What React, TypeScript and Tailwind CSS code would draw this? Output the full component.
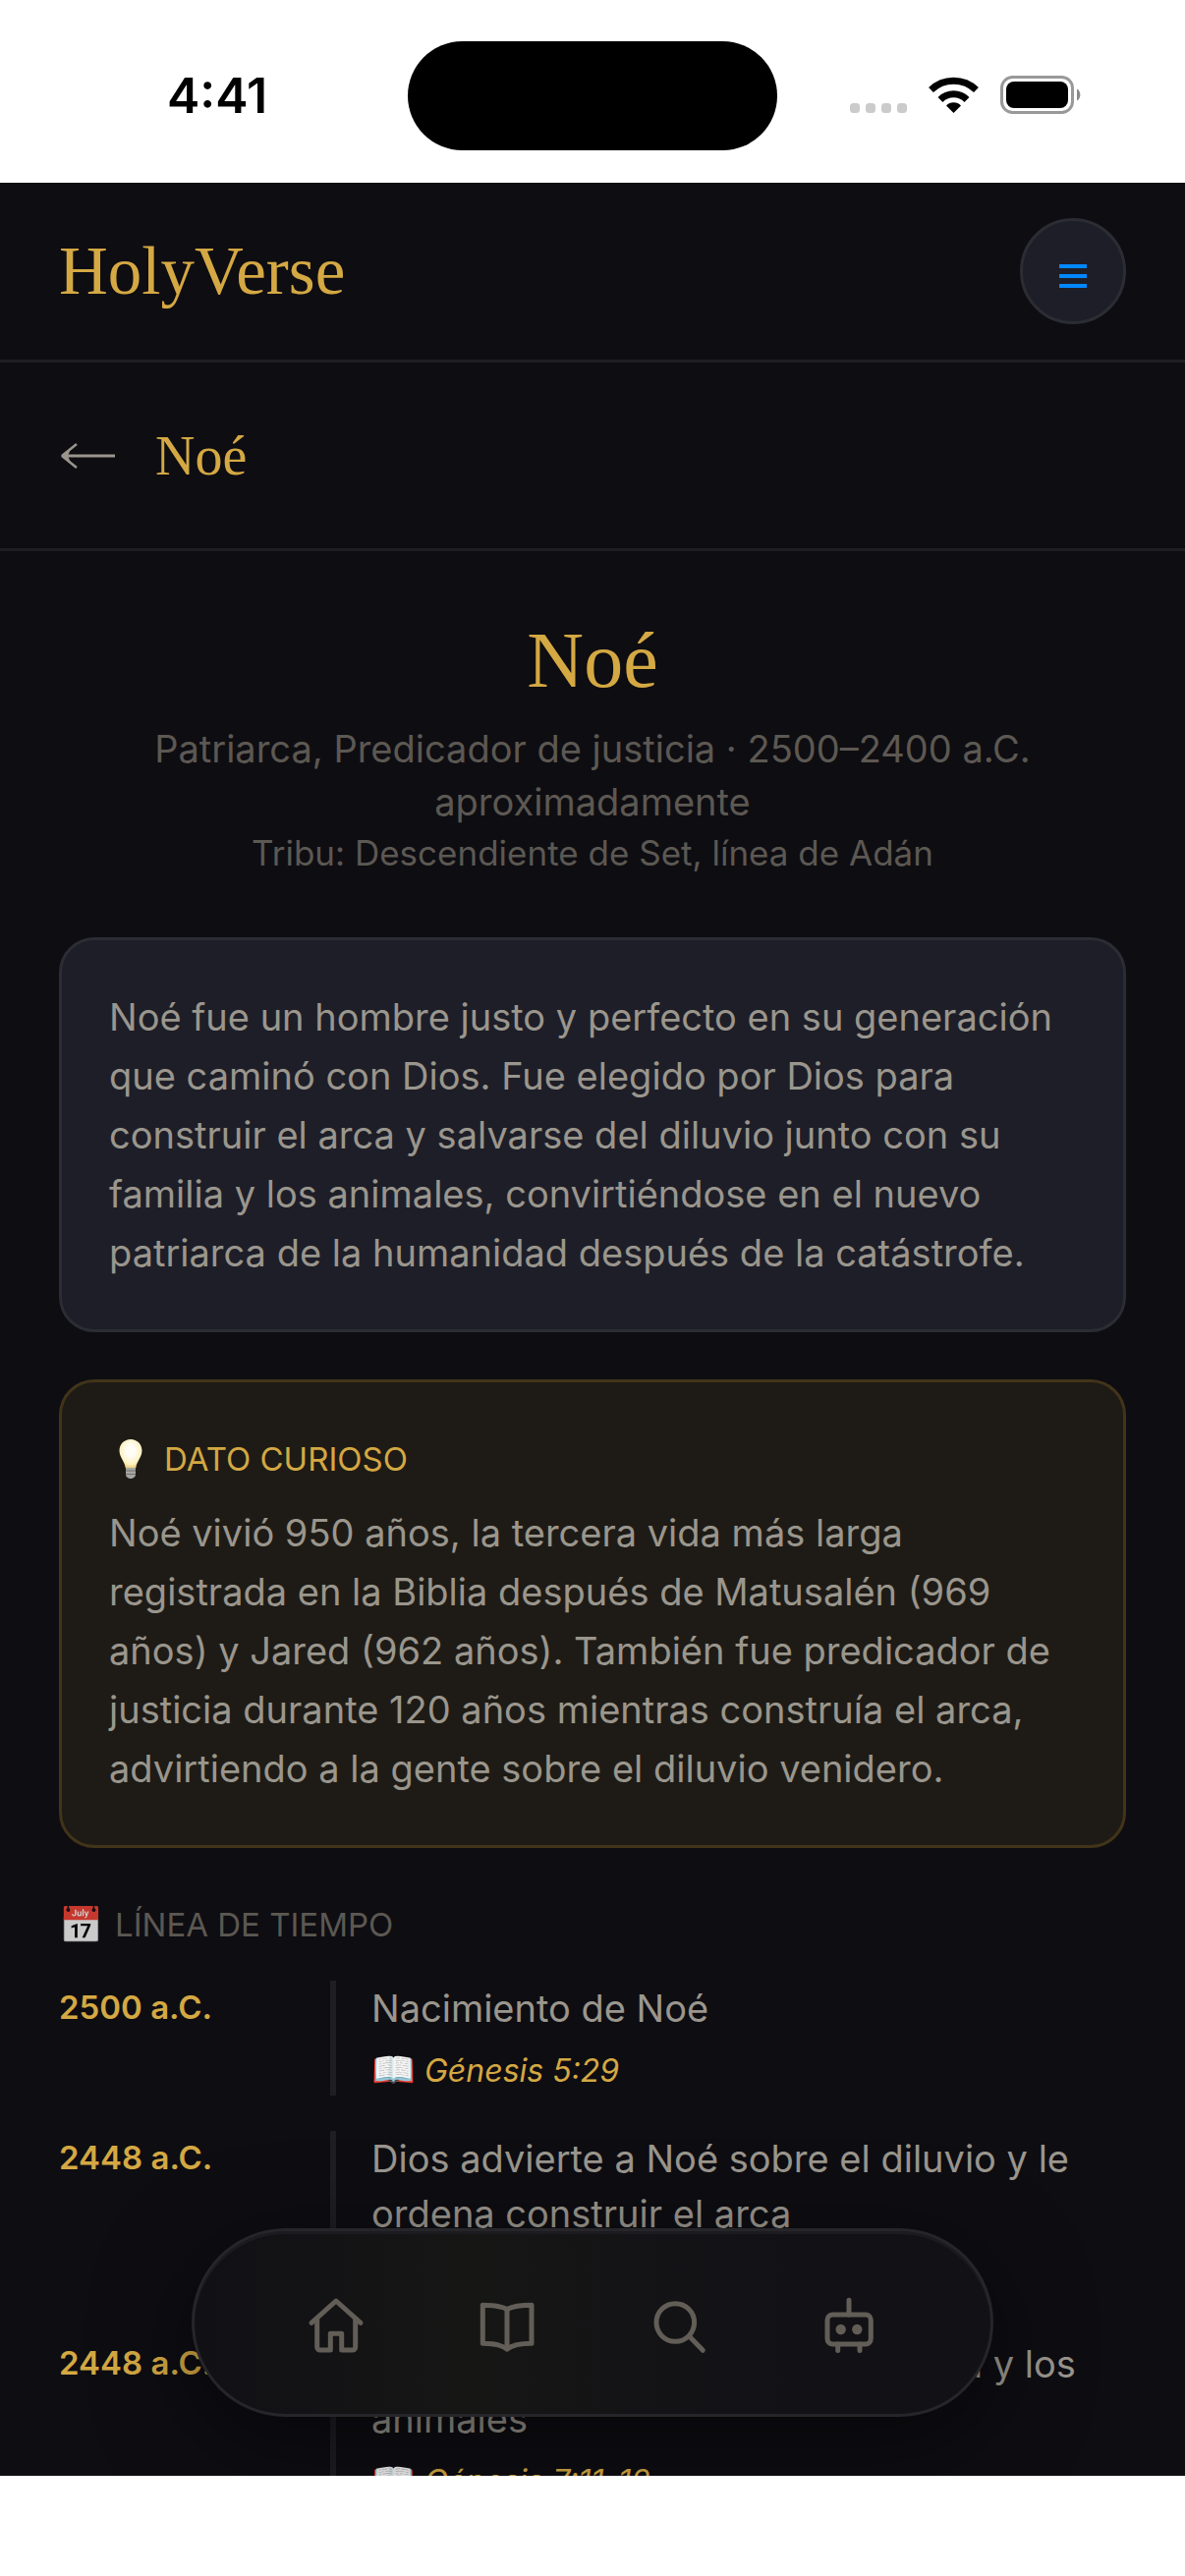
import type { ReactNode } from "react";

type TimelineEvent = {
  date: string;
  text: string;
  reference: string;
};

const events: TimelineEvent[] = [
  {
    date: "2500 a.C.",
    text: "Nacimiento de Noé",
    reference: "Génesis 5:29",
  },
  {
    date: "2448 a.C.",
    text: "Dios advierte a Noé sobre el diluvio y le ordena construir el arca",
    reference: "Génesis 6:13-22",
  },
  {
    date: "2448 a.C.",
    text: "Noé entra en el arca con su familia y los animales",
    reference: "Génesis 7:11-12",
  },
];

const StatusBar = () => (
  <div className="grid h-[186px] shrink-0 grid-cols-[1fr_376px_1fr] items-center bg-white pt-2 text-black">
    <div className="pl-[170px] text-[50px] font-semibold">4:41</div>
    <div className="h-[111px] rounded-full bg-black" />
    <div className="flex justify-end pr-[106px]">
      <svg width="235" height="40" viewBox="0 0 235 40">
        <g fill="#cbcbcb">
          <rect x="0" y="28" width="10" height="10" rx="3.5" />
          <rect x="16" y="28" width="10" height="10" rx="3.5" />
          <rect x="32" y="28" width="10" height="10" rx="3.5" />
          <rect x="48" y="28" width="10" height="10" rx="3.5" />
        </g>
        <path d="M105.5 38 L98 30.5 A10.5 10.5 0 0 1 113 30.5 Z" />
        <g fill="none" stroke="#000" strokeWidth="7">
          <path d="M92 24.5 A19 19 0 0 1 119 24.5" />
          <path d="M82.5 14.500 A33 33 0 0 1 128.5 14.500" />
        </g>
        <rect x="154.5" y="1.5" width="72" height="36" rx="11" fill="none" stroke="#999" strokeWidth="3" />
        <rect x="159" y="6" width="63" height="27" rx="8" />
        <path d="M231 13.5 C235.5 15.5 235.5 23.5 231 25.5 Z" fill="#8a8a8a" />
      </svg>
    </div>
  </div>
);

const BulbIcon = () => (
  <svg width="44" height="42" viewBox="0 0 44 42">
    <defs>
      <radialGradient id="glow" cx="0.5" cy="0.4" r="0.6">
        <stop offset="0.3" stopColor="#fffdf6" />
        <stop offset="0.8" stopColor="#fdf0c0" />
        <stop offset="1" stopColor="#ecd07c" />
      </radialGradient>
    </defs>
    <path
      d="M22 1 C28.500 1 33.500 6 33.500 12.500 C33.500 19 28.500 22.500 27.300 30 H16.700 C15.500 22.500 10.500 19 10.500 12.500 C10.500 6 15.500 1 22 1 Z"
      fill="url(#glow)"
    />
    <path d="M17 30 H27 V37 C27 39 24.500 41 22 41 C19.500 41 17 39 17 37 Z" fill="#a5a5a3" />
    <path d="M17 33 H27 M17 36.500 H27" stroke="#6f6f6e" strokeWidth="1" />
  </svg>
);

const NavButton = ({ label, children }: { label: string; children: ReactNode }) => (
  <button type="button" aria-label={label} className="text-[#625e57]">
    <svg
      width="66"
      height="66"
      viewBox="0 0 66 66"
      fill="none"
      stroke="currentColor"
      strokeWidth="5"
      strokeLinecap="round"
      strokeLinejoin="round"
    >
      {children}
    </svg>
  </button>
);

const BottomNav = () => (
  <nav className="absolute inset-x-0 bottom-[60px] mx-auto flex h-[192px] w-[816px] max-w-full items-center justify-between rounded-full border-3 border-[#26262a] bg-linear-to-r from-[#111115] via-[#161615] via-35% to-[#121116] to-75% px-[111px] shadow-[0_24px_96px_rgba(0,0,0,0.5),inset_0_3px_0_#1b1b20]">
    <NavButton label="Inicio">
      <path d="M8 33.3 L33 11 L58 33.3" />
      <path d="M13.7 29 V58 a3 3 0 0 0 3 3 H27.3 V44.3 H38.7 V61 H49.7 a3 3 0 0 0 3 -3 V29" />
    </NavButton>
    <NavButton label="Biblia">
      <path d="M33 19.5 C27 16.5 19 15.3 8.3 15.3 V54.3 C19 54.3 27 55.5 33 60 C39 55.5 47 54.3 58 54.3 V15.3 C47 15.3 39 16.5 33 19.5 Z" />
      <path d="M33 19.5 V60" />
    </NavButton>
    <NavButton label="Buscar">
      <circle cx="30.3" cy="33" r="19.3" />
      <path d="M44.7 47.3 L58.3 61.3" />
    </NavButton>
    <NavButton label="Asistente">
      <rect x="11" y="25" width="44.3" height="30" rx="5.5" />
      <path d="M33 10.3 V25 M21.7 55 V61.5 M44 55 V61.5" />
      <circle cx="24.7" cy="40" r="2.7" />
      <circle cx="41.3" cy="40" r="2.7" />
    </NavButton>
  </nav>
);

const TimelineRow = ({ event }: { event: TimelineEvent }) => (
  <li className="flex gap-9">
    <span className="w-[240px] shrink-0 text-[33px] leading-[54px] font-semibold text-[#d4a843]">
      {event.date}
    </span>
    <div className="flex-1 border-l-6 border-[#1e1e23] pl-9">
      <p className="text-[38px] leading-[56px] text-[#9a968d]">{event.text}</p>
      <p className="mt-[10px] text-[32px] leading-[51px] text-[#d4a843] italic">
        <span className="text-[36px] leading-none not-italic">📖</span> {event.reference}
      </p>
    </div>
  </li>
);

export default function App() {
  return (
    <div className="flex h-screen flex-col bg-white font-['Inter','Noto_Sans',sans-serif]">
      <StatusBar />

      <div className="relative min-h-0 flex-1 overflow-hidden bg-[#0e0d12]">
        <header className="flex items-center justify-between border-b-3 border-[#1e1e23] px-[60px] py-9">
          <span className="font-['Liberation_Serif',serif] text-[69px] leading-[108px] text-[#d4a843]">
            HolyVerse
          </span>
          <button
            type="button"
            aria-label="Menú"
            className="flex size-[108px] items-center justify-center rounded-full border-3 border-[#2c2c34] bg-[#1e1e28]"
          >
            <svg width="36" height="36" viewBox="0 0 36 36" fill="#0088ff">
              <rect x="4" y="11" width="28" height="4" />
              <rect x="4" y="21" width="28" height="4" />
              <rect x="4" y="31" width="28" height="4" />
            </svg>
          </button>
        </header>

        <div className="flex h-[192px] items-center gap-10 border-b-3 border-[#1e1e23] px-[60px]">
          <button type="button" aria-label="Volver">
            <svg width="58" height="36" viewBox="0 0 58 36" fill="none" stroke="#9a968d" strokeWidth="3">
              <path d="M5 18 H57" />
              <path d="M3 18 L18 6 M3 18 L18 30" strokeWidth="2.5" />
              <path d="M2 18 L12 11 L9 18 L12 25 Z" fill="#9a968d" stroke="none" />
            </svg>
          </button>
          <span className="font-['Liberation_Serif',serif] text-[56px] leading-[72px] text-[#d4a843]">Noé</span>
        </div>

        <main className="px-[60px] pt-[60px]">
          <div className="mb-[60px] text-center text-[#5c5852]">
            <h1 className="mb-3 font-['Liberation_Serif',serif] text-[80px] leading-[102px] font-normal text-[#d4a843]">
              Noé
            </h1>
            <p className="text-[38px] leading-[54px]">
              Patriarca, Predicador de justicia · 2500–2400 a.C. aproximadamente
            </p>
            <p className="text-[35px] leading-[51px]">Tribu: Descendiente de Set, línea de Adán</p>
          </div>

          <section className="mb-12 rounded-[36px] border-3 border-[#2c2c34] bg-[#1e1e28] p-12">
            <p className="text-[38px] leading-[60px] text-[#9a968d]">
              Noé fue un hombre justo y perfecto en su generación que caminó con Dios. Fue elegido por Dios para
              construir el arca y salvarse del diluvio junto con su familia y los animales, convirtiéndose en el
              nuevo patriarca de la humanidad después de la catástrofe.
            </p>
          </section>

          <section className="mb-12 rounded-[36px] border-3 border-[#423419] bg-[#1e1b16] p-12">
            <h2 className="mb-[15px] flex items-center gap-3 text-[33px] leading-[60px] font-normal text-[#d4a843] uppercase">
              <BulbIcon /> Dato curioso
            </h2>
            <p className="text-[38px] leading-[60px] text-[#9a968d]">
              Noé vivió 950 años, la tercera vida más larga registrada en la Biblia después de Matusalén (969
              años) y Jared (962 años). También fue predicador de justicia durante 120 años mientras construía
              el arca, advirtiendo a la gente sobre el diluvio venidero.
            </p>
          </section>

          <section>
            <h2 className="mb-[27px] flex items-center gap-3 text-[33px] leading-[60px] font-normal text-[#5c5852] uppercase">
              <span className="text-[36px] opacity-80">📅</span> Línea de tiempo
            </h2>
            <ul className="flex flex-col gap-9">
              {events.map((event, index) => (
                <TimelineRow key={index} event={event} />
              ))}
            </ul>
          </section>
        </main>

        <BottomNav />
      </div>

      <div className="h-[102px] shrink-0 bg-white" />
    </div>
  );
}
